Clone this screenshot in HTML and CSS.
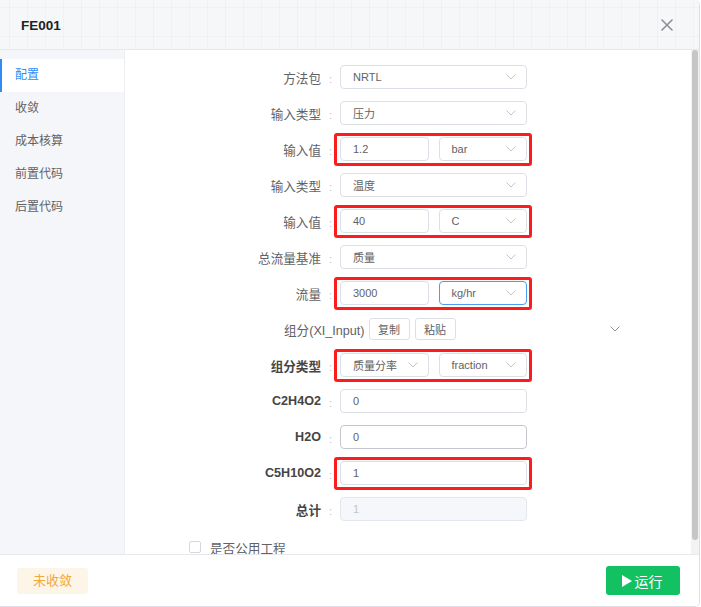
FILE: index.html
```html
<!DOCTYPE html>
<html lang="zh">
<head>
<meta charset="utf-8">
<title>FE001</title>
<link rel="stylesheet" href="styles.css">
</head>
<body>
<div class="dialog">
  <header class="hd">
    <span class="title">FE001</span>
    <svg class="close" width="12" height="12" viewBox="0 0 12 12"><path d="M1 1L11 11M11 1L1 11" stroke="#8c8f95" stroke-width="1.6" stroke-linecap="round"/></svg>
  </header>
  <div class="main">
    <nav class="side">
      <div class="nav-item active">配置</div>
      <div class="nav-item">收敛</div>
      <div class="nav-item">成本核算</div>
      <div class="nav-item">前置代码</div>
      <div class="nav-item">后置代码</div>
    </nav>
    <div class="content">
      <div class="form">
        <div class="row">
          <span class="lbl">方法包</span><span class="colon">:</span>
          <div class="ctrl"><div class="box select"><span>NRTL</span><svg class="chev" width="10" height="6" viewBox="0 0 10 6"><path d="M0.5 0.5L5 5L9.5 0.5" fill="none" stroke="#c0c4cc"/></svg></div></div>
        </div>
        <div class="row">
          <span class="lbl">输入类型</span><span class="colon">:</span>
          <div class="ctrl"><div class="box select"><span>压力</span><svg class="chev" width="10" height="6" viewBox="0 0 10 6"><path d="M0.5 0.5L5 5L9.5 0.5" fill="none" stroke="#c0c4cc"/></svg></div></div>
        </div>
        <div class="row">
          <span class="lbl">输入值</span><span class="colon">:</span>
          <div class="ctrl split mark">
            <div class="box"><span>1.2</span></div>
            <div class="box select"><span>bar</span><svg class="chev" width="10" height="6" viewBox="0 0 10 6"><path d="M0.5 0.5L5 5L9.5 0.5" fill="none" stroke="#c0c4cc"/></svg></div>
          </div>
        </div>
        <div class="row">
          <span class="lbl">输入类型</span><span class="colon">:</span>
          <div class="ctrl"><div class="box select"><span>温度</span><svg class="chev" width="10" height="6" viewBox="0 0 10 6"><path d="M0.5 0.5L5 5L9.5 0.5" fill="none" stroke="#c0c4cc"/></svg></div></div>
        </div>
        <div class="row">
          <span class="lbl">输入值</span><span class="colon">:</span>
          <div class="ctrl split mark">
            <div class="box"><span>40</span></div>
            <div class="box select"><span>C</span><svg class="chev" width="10" height="6" viewBox="0 0 10 6"><path d="M0.5 0.5L5 5L9.5 0.5" fill="none" stroke="#c0c4cc"/></svg></div>
          </div>
        </div>
        <div class="row">
          <span class="lbl">总流量基准</span><span class="colon">:</span>
          <div class="ctrl"><div class="box select"><span>质量</span><svg class="chev" width="10" height="6" viewBox="0 0 10 6"><path d="M0.5 0.5L5 5L9.5 0.5" fill="none" stroke="#c0c4cc"/></svg></div></div>
        </div>
        <div class="row">
          <span class="lbl">流量</span><span class="colon">:</span>
          <div class="ctrl split mark">
            <div class="box"><span>3000</span></div>
            <div class="box select focus"><span>kg/hr</span><svg class="chev" width="10" height="6" viewBox="0 0 10 6"><path d="M0.5 0.5L5 5L9.5 0.5" fill="none" stroke="#c0c4cc"/></svg></div>
          </div>
        </div>
        <div class="row group-row">
          <span class="group-lbl">组分(XI_Input)</span>
          <button class="mini-btn">复制</button>
          <button class="mini-btn">粘贴</button>
          <svg class="chev group-chev" width="10" height="6" viewBox="0 0 10 6"><path d="M0.5 0.5L5 5L9.5 0.5" fill="none" stroke="#909399"/></svg>
        </div>
        <div class="row">
          <span class="lbl bold">组分类型</span><span class="colon">:</span>
          <div class="ctrl split mark">
            <div class="box select"><span>质量分率</span><svg class="chev" width="10" height="6" viewBox="0 0 10 6"><path d="M0.5 0.5L5 5L9.5 0.5" fill="none" stroke="#c0c4cc"/></svg></div>
            <div class="box select"><span>fraction</span><svg class="chev" width="10" height="6" viewBox="0 0 10 6"><path d="M0.5 0.5L5 5L9.5 0.5" fill="none" stroke="#c0c4cc"/></svg></div>
          </div>
        </div>
        <div class="row">
          <span class="lbl bold">C2H4O2</span><span class="colon">:</span>
          <div class="ctrl"><div class="box"><span>0</span></div></div>
        </div>
        <div class="row">
          <span class="lbl bold">H2O</span><span class="colon">:</span>
          <div class="ctrl"><div class="box hover"><span>0</span></div></div>
        </div>
        <div class="row">
          <span class="lbl bold">C5H10O2</span><span class="colon">:</span>
          <div class="ctrl mark"><div class="box"><span>1</span></div></div>
        </div>
        <div class="row">
          <span class="lbl bold">总计</span><span class="colon">:</span>
          <div class="ctrl"><div class="box disabled"><span>1</span></div></div>
        </div>
        <div class="check-row">
          <span class="checkbox"></span><span class="check-lbl">是否公用工程</span>
        </div>
      </div>
    </div>
    <div class="scrollbar"><div class="thumb"></div></div>
  </div>
  <footer class="ft">
    <span class="tag">未收敛</span>
    <button class="run"><svg class="play" width="10" height="12" viewBox="0 0 10 12"><path d="M0 0L10 6L0 12Z" fill="#fff"/></svg>运行</button>
  </footer>
</div>
</body>
</html>
```

FILE: styles.css
```css
* { box-sizing: border-box; }

html, body {
  margin: 0;
  padding: 0;
  background: #ffffff;
}

body {
  font-family: "Liberation Sans", "Noto Sans CJK SC", sans-serif;
  color: #606266;
}

.dialog {
  width: 700px;
  height: 607px;
  display: flex;
  flex-direction: column;
  border-right: 1px solid #dcdfe6;
  border-bottom: 1px solid #dcdfe6;
  border-radius: 0 5px 5px 0;
  overflow: hidden;
  background: #fff;
}

/* header */
.hd {
  height: 50px;
  flex: none;
  display: flex;
  align-items: center;
  justify-content: space-between;
  padding: 0 26px 0 21px;
  border-bottom: 1px solid #e6e8ec;
  background-color: #f6f7f9;
  background-image:
    linear-gradient(90deg, rgba(0, 0, 0, 0.022) 1px, transparent 1px),
    linear-gradient(rgba(0, 0, 0, 0.022) 1px, transparent 1px);
  background-size: 18px 29px;
  background-position: 9px 7px;
}

.title {
  font-size: 13.5px;
  font-weight: bold;
  color: #222;
  padding-top: 1px;
}

.close { display: block; }

/* main */
.main {
  flex: 1;
  display: flex;
  min-height: 0;
}

.side {
  width: 125px;
  flex: none;
  background: #f5f6fa;
  border-right: 1px solid #eceef2;
  padding-top: 9px;
}

.nav-item {
  height: 33px;
  line-height: 33px;
  padding-left: 15px;
  font-size: 12px;
  color: #5f6266;
}

.nav-item.active {
  background: #fff;
  color: #2f8cf4;
  box-shadow: inset 2px 0 0 #2f8cf4;
}

.content {
  flex: 1;
  overflow: hidden;
  background: #fff;
}

.scrollbar {
  width: 8px;
  flex: none;
  background: #f3f3f3;
  padding: 0 1px 0 1px;
}

.thumb {
  height: 490px;
  background: #c6c6c6;
  border-radius: 4px;
}

.form {
  padding: 15px 0 12px;
  display: flex;
  flex-direction: column;
  gap: 12px;
}

.row {
  display: flex;
  align-items: center;
  height: 24px;
  flex: none;
}

.lbl {
  width: 196px;
  text-align: right;
  font-size: 12.6px;
  color: #606266;
  white-space: nowrap;
}

.lbl.bold {
  font-weight: bold;
  color: #454545;
}

.colon {
  width: 19px;
  text-align: center;
  font-size: 11px;
  color: #b8bbc0;
  padding-top: 3px;
}

.ctrl {
  width: 187px;
  height: 24px;
  display: flex;
  position: relative;
}

.ctrl.split { gap: 10px; }

.ctrl.mark::after {
  content: "";
  position: absolute;
  top: -4px;
  bottom: -5px;
  left: -6px;
  right: -5px;
  border: 3px solid #fb1d1d;
  border-radius: 3px;
  pointer-events: none;
}

.box {
  flex: 1;
  min-width: 0;
  height: 24px;
  border: 1px solid #dcdfe6;
  border-radius: 4px;
  display: flex;
  align-items: center;
  justify-content: space-between;
  padding: 0 10px 0 12px;
  font-size: 11px;
  color: #606266;
  background: #fff;
}

.box.focus { border-color: #4a9cf5; }
.box.hover { border-color: #c4c7cd; }

.box.disabled {
  background: #f5f7fa;
  border-color: #e4e7ed;
  color: #c0c4cc;
}

.chev { display: block; flex: none; }

/* group row */
.group-row {
  padding-left: 159px;
}

.group-lbl {
  font-size: 12.6px;
  color: #606266;
  margin-right: 4px;
  white-space: nowrap;
}

.mini-btn {
  height: 22px;
  width: 41px;
  margin-right: 5px;
  padding: 0;
  border: 1px solid #dcdfe6;
  border-radius: 3px;
  background: #fff;
  font-family: inherit;
  font-size: 11px;
  color: #606266;
}

.group-chev {
  margin-left: auto;
  margin-right: 71px;
}

/* checkbox */
.check-row {
  display: flex;
  align-items: center;
  padding-left: 64px;
  margin-top: 7px;
  height: 14px;
  flex: none;
}

.checkbox {
  width: 12px;
  height: 12px;
  border: 1px solid #d4d7dd;
  border-radius: 2px;
  background: #fff;
  margin-right: 9px;
}

.check-lbl {
  font-size: 12.6px;
  color: #606266;
}

/* footer */
.ft {
  height: 52px;
  flex: none;
  border-top: 1px solid #e6e8ec;
  display: flex;
  align-items: center;
  justify-content: space-between;
  padding: 0 19px 0 17px;
  background: #fff;
}

.tag {
  height: 26px;
  line-height: 26px;
  padding: 0 16px;
  border-radius: 3px;
  background: #fdf5e8;
  color: #f1a73a;
  font-size: 13px;
}

.run {
  height: 29px;
  width: 74px;
  border: none;
  border-radius: 3px;
  background: #12c162;
  color: #fff;
  font-family: inherit;
  font-size: 14px;
  display: flex;
  align-items: center;
  justify-content: center;
  gap: 3px;
  padding: 0 2px 0 0;
}

.play { display: block; }
```
